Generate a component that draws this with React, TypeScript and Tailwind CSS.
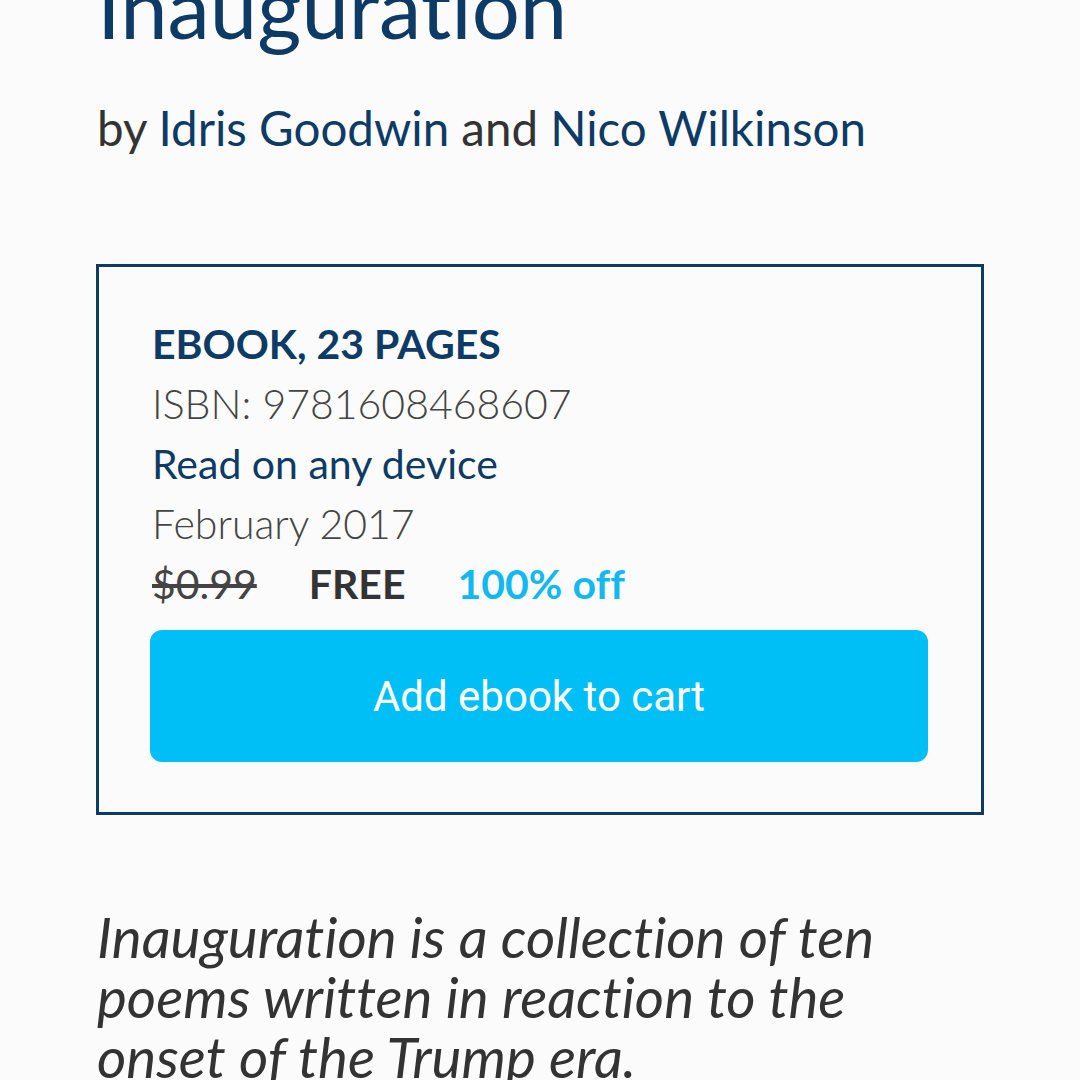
import React from 'react';

const navy = 'text-[#0d3b66]';

export default function App() {
  return (
    <div className="min-h-screen overflow-hidden bg-[#fbfbfb] pl-[97px] pr-[96px] font-['Lato','Open_Sans',sans-serif] text-[#333] [font-variant-ligatures:none]">
      <h1 className={`mt-[-34px] text-[85px] leading-[80px] font-normal ${navy}`}>Inauguration</h1>

      <p className="mt-[52px] text-[47.5px] leading-[60px] text-[#333]">
        by <span className={navy}>Idris Goodwin</span> and <span className={navy}>Nico Wilkinson</span>
      </p>

      <div className="ml-[-1px] mt-[106px] w-[888px] border-[3px] border-[#0d3b66] pl-[53px] pr-[51px] pt-[47px] pb-[50px]">
        <div className={`text-[41px] leading-[60px] font-bold ${navy}`}>EBOOK, 23 PAGES</div>
        <div className="text-[41px] leading-[60px] font-light text-[#444]">ISBN: 9781608468607</div>
        <div className={`text-[41px] leading-[60px] ${navy}`}>Read on any device</div>
        <div className="text-[41px] leading-[60px] font-light text-[#444]">February 2017</div>
        <div className="flex gap-[52px] text-[41px] leading-[60px]">
          <span className="line-through text-[#444]">$0.99</span>
          <span className="font-bold text-[#333]">FREE</span>
          <span className="font-bold text-[#13b8ef]">100% off</span>
        </div>
        <button className="ml-[-2px] mt-[16px] flex h-[132px] w-full items-center justify-center rounded-[12px] bg-[#00bff7] font-['Roboto',sans-serif] text-[42px] text-white">
          Add ebook to cart
        </button>
      </div>

      <p className="mt-[91px] w-[800px] text-[56.5px] leading-[60px] italic text-[#333]">
        Inauguration is a collection of ten poems written in reaction to the onset of the Trump era.
      </p>
    </div>
  );
}
